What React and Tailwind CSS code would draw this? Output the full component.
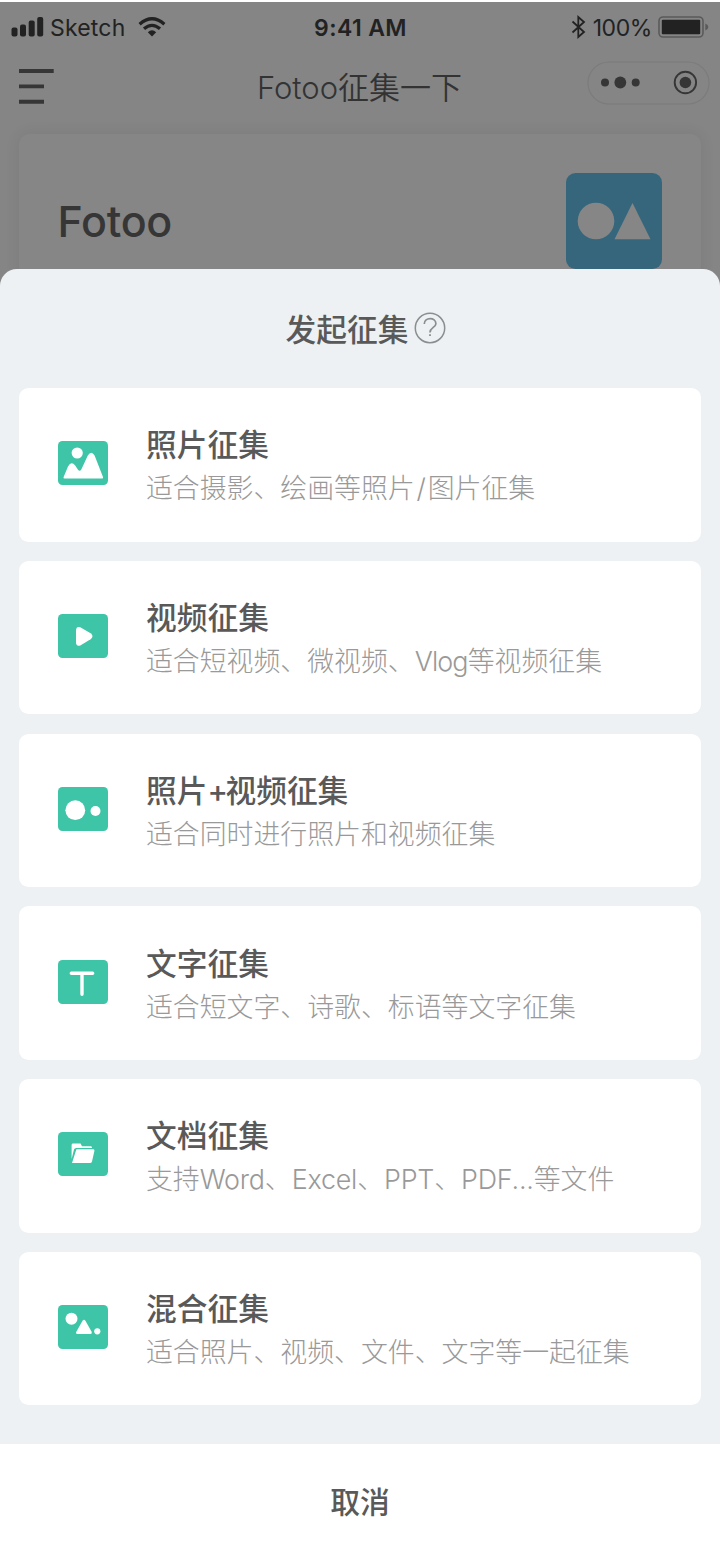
const options = [
  { id: 'photo', title: '照片征集', desc: '适合摄影、绘画等照片/图片征集', latin: 'px-[1.8px]' },
  { id: 'video', title: '视频征集', desc: '适合短视频、微视频、Vlog等视频征集', latin: 'tracking-[-0.9px]' },
  { id: 'both', title: '照片+视频征集', desc: '适合同时进行照片和视频征集' },
  { id: 'text', title: '文字征集', desc: '适合短文字、诗歌、标语等文字征集' },
  { id: 'file', title: '文档征集', desc: '支持Word、Excel、PPT、PDF...等文件', latin: 'tracking-[-0.22px]' },
  { id: 'mixed', title: '混合征集', desc: '适合照片、视频、文件、文字等一起征集' },
]

const glyphs = {
  photo: (
    <>
      <circle cx="19.2" cy="12" r="5.6" />
      <path d="M5.6 36 10 25.5Q13.3 19.5 17.2 24.5L20 28.7Q21.7 31 23.3 28.5L29.8 14.5Q33.2 8.8 36.6 14.5L45 36Q45.5 37.6 44 37.6H6.6Q5 37.6 5.6 36Z" />
    </>
  ),
  video: <path d="M18 17Q18 11.8 22.3 13.3L32.6 19.3Q36.4 22.3 32.6 25.3L22.3 31.4Q18 33 18 28Z" />,
  both: (
    <>
      <circle cx="17.3" cy="23.2" r="9.9" />
      <circle cx="37.5" cy="24" r="5" />
    </>
  ),
  text: <path d="M13.3 13.2H34.7M24 13.2V34.3" fill="none" stroke="#fff" strokeWidth="3.4" strokeLinecap="round" />,
  file: (
    <>
      <path d="M13.6 13Q13.6 11.6 15 11.6H22.6L24 14.2H33Q34 14.2 34 16H18.2Q16.5 16 16 17.5L13.6 27Z" />
      <path d="M18.4 17.3H35.3Q36.8 17.3 36.4 19L34 29.5Q33.6 31 32 31H14Z" />
    </>
  ),
  mixed: (
    <>
      <circle cx="13.5" cy="13.7" r="6" />
      <path d="M24.5 15.8Q26 13.6 27.4 15.8L33.6 26.7Q34.3 28.9 32.3 28.9H19.5Q17.4 28.9 18.3 26.7Z" />
      <circle cx="39.3" cy="26.3" r="3.1" />
    </>
  ),
}

function StatusBar() {
  return (
    <div className="mt-0.5 grid h-[50px] grid-cols-3 items-center pl-[11px] pr-[10px] text-[#222]">
      <div className="flex items-center">
        <svg width="33" height="20" viewBox="0 0 33 20" fill="currentColor">
          <rect x="0.5" y="10.6" width="6" height="8.8" rx="2" />
          <rect x="9" y="7.6" width="6" height="11.8" rx="2" />
          <rect x="17.7" y="3.6" width="6" height="15.8" rx="2" />
          <rect x="26.2" y="0" width="6" height="19.4" rx="2" />
        </svg>
        <span className="ml-[6px] pt-[2px] text-[23px] leading-none tracking-[0.2px]">Sketch</span>
        <svg className="ml-3" width="28" height="20" viewBox="0 0 28 20" fill="none" stroke="currentColor" strokeWidth="3.3">
          <path d="M1.6 7.2Q14-3.6 26.4 7.2" />
          <path d="M6 11.8Q14 5 22 11.8" />
          <path d="M9.8 15.3Q14 11.4 18.2 15.3L14 19.4Z" fill="currentColor" stroke="none" />
        </svg>
      </div>
      <div className="pt-[2px] text-center text-[23px] font-semibold leading-none tracking-[0.4px]">9:41 AM</div>
      <div className="flex items-center justify-end">
        <svg width="15" height="24" viewBox="0 0 15 24" fill="none" stroke="currentColor" strokeWidth="1.8">
          <path d="M1.5 6.5 13 17 7.3 22V2L13 7 1.5 17.5" />
        </svg>
        <span className="ml-[7px] pt-[2px] text-[23px] leading-none tracking-[-0.4px]">100%</span>
        <svg className="ml-[6px]" width="52" height="22" viewBox="0 0 52 22">
          <rect x="1" y="1" width="44" height="20" rx="4" fill="none" stroke="#5a5a5a" strokeWidth="1.6" />
          <rect x="3.8" y="3.8" width="38.4" height="14.4" rx="1" fill="#222" />
          <path d="M47.3 7.6Q50.3 8.8 50.3 11T47.3 14.4Z" fill="#5a5a5a" />
        </svg>
      </div>
    </div>
  )
}

function NavBar() {
  return (
    <div className="flex h-[80px] items-start justify-between pl-[19px] pr-[10px]">
      <svg className="mt-[17px]" width="113" height="36" viewBox="0 0 113 36" stroke="#363636" strokeWidth="3.9">
        <path d="M0 2H34.7M0 17.4H25M0 32.8H25" />
      </svg>
      <h1 className="mt-[18px] text-[31px] font-[350] leading-[36px] text-[#333]">Fotoo征集一下</h1>
      <svg className="mt-[9px]" width="123" height="44" viewBox="0 0 123 44" fill="#363636">
        <rect x="1" y="1" width="121" height="42" rx="21" fill="none" stroke="#7d7b7b" strokeWidth="1.2" />
        <circle cx="18" cy="21.5" r="4" />
        <circle cx="33.3" cy="21.5" r="5.9" />
        <circle cx="48.7" cy="21.5" r="4" />
        <circle cx="98.4" cy="21.5" r="10.7" fill="none" stroke="#363636" strokeWidth="1.9" />
        <circle cx="98.4" cy="21.5" r="5.8" />
      </svg>
    </div>
  )
}

function Backdrop() {
  return (
    <div className="h-[268.8px] overflow-hidden border-t-2 border-white bg-[#858585]">
      <div className="-mt-0.5">
        <StatusBar />
        <NavBar />
      </div>
      <div className="mx-[19.2px] mt-[2px] flex h-[160px] justify-between rounded-[10px] bg-[#868686] px-[38.4px] pt-[38.4px] shadow-[0_0_16px_rgba(0,0,0,0.07)]">
        <div className="pt-[25px] text-[43px] font-[450] leading-[48px] tracking-[-0.3px] text-[#363636]">Fotoo</div>
        <svg className="mt-[0.6px]" width="96" height="96" viewBox="0 0 96 96">
          <rect width="96" height="96" rx="9.6" fill="#35667c" />
          <circle cx="30" cy="48" r="18.3" fill="#868686" />
          <path d="M66.5 30 84.5 66.3H48.5Z" fill="#868686" />
        </svg>
      </div>
    </div>
  )
}

function MixedText({ text, latin = 'tracking-normal' }) {
  return text.split(/([A-Za-z.+/]+)/).map((part, i) => (
    i % 2 ? <span key={i} className={latin}>{part}</span> : part
  ))
}

function OptionCard({ id, title, desc, latin }) {
  return (
    <button className="flex h-[153.6px] items-center rounded-[9.6px] bg-white pl-[38.4px] text-left">
      <svg className="mb-[3px]" width="50" height="44" viewBox="0 0 50 44" fill="#fff">
        <rect width="50" height="44" rx="4.5" fill="#3ec4a7" />
        {glyphs[id]}
      </svg>
      <div className="ml-[38.4px] whitespace-nowrap pt-[4px]">
        <div className="text-[30.72px] font-medium leading-[44px] text-[#595959]">
          <MixedText text={title} latin="tracking-[-2.5px]" />
        </div>
        <div className="text-[26.88px] font-light leading-[43px] text-[#999]">
          <MixedText text={desc} latin={latin} />
        </div>
      </div>
    </button>
  )
}

export default function App() {
  return (
    <div className="flex h-[1559px] w-[720px] flex-col overflow-hidden bg-[#858585] font-['Inter','Noto_Sans_CJK_SC',sans-serif]">
      <Backdrop />
      <div className="flex flex-1 flex-col rounded-t-[17px] bg-[#edf1f3]">
        <div className="flex h-[119.2px] items-center justify-center pl-[12px]">
          <h2 className="pt-[3px] text-[30.72px] font-medium leading-[44px] text-[#595959]">发起征集</h2>
          <svg className="ml-[6px]" width="32" height="32" viewBox="0 0 32 32" fill="none" stroke="#8b8d8e" strokeWidth="1.5">
            <circle cx="16" cy="16" r="14.7" />
            <path d="M10.3 11.9C10.3 4.9 21.9 4.9 21.9 11.7C21.9 15.4 16 15.6 16 20.4" strokeWidth="1.7" />
            <path d="M16 22.2V24" strokeWidth="1.8" />
          </svg>
        </div>
        <div className="flex flex-col gap-[19.2px] px-[19.2px]">
          {options.map((option) => (
            <OptionCard key={option.id} {...option} />
          ))}
        </div>
        <button className="mt-auto h-[115.4px] bg-white pt-[3px] text-[29.8px] font-medium text-[#595959]">取消</button>
      </div>
    </div>
  )
}
